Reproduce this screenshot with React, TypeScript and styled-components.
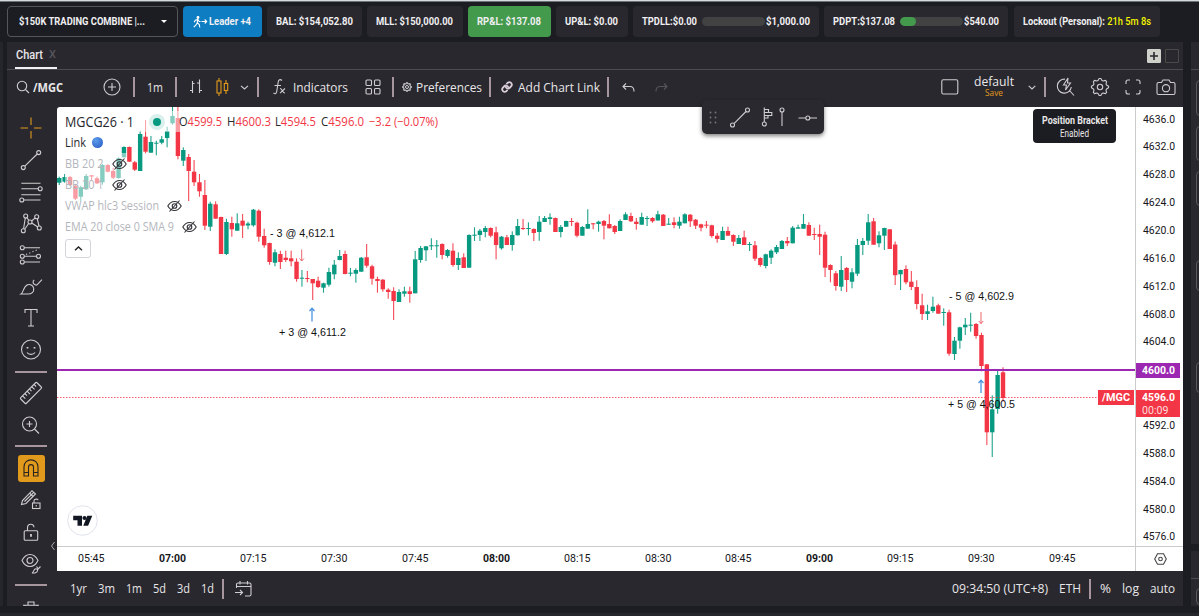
import React, { useLayoutEffect, useRef, useState } from 'react';
import styled, { createGlobalStyle, css } from 'styled-components';

const c = {
  page: '#1c1d22',
  panel: '#29282e',
  line: '#4d4c52',
  icon: '#cfcdd0',
  sep: '#a8969f',
  up: '#089981',
  down: '#f23645',
  purple: '#9c27b0',
  gold: '#e29a1c',
};

const ui = `'Open Sans', 'Noto Sans', sans-serif`;
const roboto = `Roboto, 'Liberation Sans', sans-serif`;

const Global = createGlobalStyle`
  * { box-sizing: border-box; }
  html, body { margin: 0; background: ${c.page}; overflow: hidden; }
`;

/* ---------- text with a set width ---------- */
const FitBox = styled.span<{ $w: number; $ml?: number }>`
  display: inline-block;
  flex: none;
  width: ${p => p.$w}px;
  margin-left: ${p => p.$ml ?? 0}px;
  white-space: pre;
`;
const FitInner = styled.span`
  display: inline-block;
  transform-origin: 0 50%;
`;
function Fit({ w, ml, children }: { w: number; ml?: number; children: React.ReactNode }) {
  const ref = useRef<HTMLSpanElement>(null);
  const [k, setK] = useState(1);
  useLayoutEffect(() => {
    if (ref.current) setK(w / parseFloat(getComputedStyle(ref.current).width));
  }, [w, children]);
  return (
    <FitBox $w={w} $ml={ml}>
      <FitInner ref={ref} style={{ transform: `scaleX(${k})` }}>{children}</FitInner>
    </FitBox>
  );
}

/* ---------- frame ---------- */
const Page = styled.div`
  width: 1199px;
  height: 616px;
  display: flex;
  flex-direction: column;
  background: ${c.page};
  border-top: 1px solid #d5dade;
  box-shadow: inset 0 1px 0 #6d7277;
  overflow: hidden;
  font-family: ${ui};
  color: #e8e6e8;
`;
const Header = styled.header`
  height: 41px;
  flex: none;
  display: flex;
  padding: 5px 0 0 7px;
`;
const Chip = styled.div<{ $w: number; $bg?: string; $gap?: number; $outlined?: boolean; $pad?: number }>`
  width: ${p => p.$w}px;
  height: 31px;
  margin-right: ${p => p.$gap ?? 5}px;
  padding-left: ${p => p.$pad ?? 9}px;
  flex: none;
  display: flex;
  align-items: center;
  border-radius: 4px;
  background: ${p => p.$bg ?? c.panel};
  ${p => p.$outlined && css`border: 1px solid #55555a; background: ${c.page};`}
  font: 700 11px/14px ${roboto};
  color: #f0eff1;
`;
const Caret = styled.i`
  margin-left: 16px;
  border: 3.5px solid transparent;
  border-top-color: #fff;
  border-bottom: 0;
`;
const Meter = styled.div<{ $fill: number }>`
  width: 63px;
  height: 9px;
  margin-left: 5px;
  border-radius: 5px;
  overflow: hidden;
  background: #424243;
  &::before {
    content: '';
    display: block;
    width: ${p => p.$fill}px;
    height: 9px;
    border-radius: 5px;
    background: #439a4d;
  }
`;
const Yellow = styled.span`color: #f5f500; font-weight: 500;`;

const Workspace = styled.main`
  height: 564px;
  flex: none;
  display: flex;
`;
const EdgeStrip = styled.div`
  width: 3px;
  margin: 0 4px 0 0;
  background: #25262b;
`;
const Panel = styled.section`
  width: 1176px;
  background: ${c.panel};
  display: flex;
  flex-direction: column;
  overflow: hidden;
`;
const SidePanels = styled.aside`
  width: 8px;
  margin-left: 8px;
  display: flex;
  flex-direction: column;
  overflow: hidden;
`;
const SidePanel = styled.div<{ $h: number; $mt?: number }>`
  height: ${p => p.$h}px;
  margin-top: ${p => p.$mt ?? 0}px;
  background: ${c.panel};
  flex: none;
`;
const SideRule = styled.div<{ $mt: number }>`
  padding-top: ${p => p.$mt}px;
  border-bottom: 1px solid ${c.line};
`;
const SideField = styled.div<{ $h: number; $mt: number }>`
  width: 20px;
  height: ${p => p.$h}px;
  margin: ${p => p.$mt}px 0 0 5px;
  border: 1px solid #5a5a5e;
  border-radius: 4px;
`;
const Footer = styled.footer`
  height: 10px;
  margin-top: 7px;
  background: #25262b;
`;

const Tabs = styled.div`
  height: 28px;
  flex: none;
  display: flex;
  align-items: stretch;
  padding: 0 4px 0 8px;
  border-bottom: 1px solid ${c.line};
`;
const Tab = styled.div`
  width: 42px;
  display: flex;
  align-items: center;
  border-bottom: 2px solid #f2f2f2;
  font: 500 12px/14px ${roboto};
  padding-left: 1px;
`;
const Close = styled.span`color: #57565b; margin-left: 6px; font-size: 11px;`;
const TabTools = styled.div`
  margin-left: auto;
  display: flex;
  gap: 4px;
  align-items: center;
`;
const TabBtn = styled.span<{ $solid?: boolean }>`
  width: 14px;
  height: 14px;
  border: 1px solid ${p => (p.$solid ? '#cfd2cb' : '#4b4b47')};
  background: ${p => (p.$solid ? '#cfd2cb' : 'transparent')};
  border-radius: 1px;
  display: flex;
  align-items: center;
  justify-content: center;
`;

const Toolbar = styled.div`
  height: 37px;
  flex: none;
  display: flex;
  align-items: center;
  font-size: 13px;
  line-height: 18px;
  padding-bottom: 3px;
  font-weight: 500;
`;
const Sep = styled.i<{ $ml: number }>`
  width: 2px;
  height: 20px;
  flex: none;
  margin-left: ${p => p.$ml}px;
  background: ${c.sep};
`;
const Ico = styled.svg<{ $ml?: number; $c?: string }>`
  flex: none;
  margin-left: ${p => p.$ml ?? 0}px;
  fill: none;
  stroke: ${p => p.$c ?? c.icon};
  stroke-width: 1.1;
  overflow: visible;
`;
const Layout = styled.div`
  width: 40px;
  margin: -2px 0 0 15px;
  display: flex;
  flex-direction: column;
  align-items: center;
  line-height: 13px;
`;
const Save = styled.div`
  color: ${c.gold};
  font-size: 9px;
  line-height: 9px;
  height: 9px;
`;

/* ---------- body ---------- */
const Body = styled.div`
  height: 464px;
  flex: none;
  display: flex;
`;
const DrawBar = styled.nav`
  position: relative;
  width: 50px;
  height: 499px;
  overflow: hidden;
  padding-top: 5.5px;
  display: flex;
  flex-direction: column;
`;
const Tool = styled.div<{ $on?: boolean }>`
  height: 31.7px;
  flex: none;
  margin-left: 10.5px;
  width: 27px;
  display: flex;
  align-items: center;
  justify-content: center;
  ${p => p.$on && css`
    height: 27px;
    margin-top: 2.6px;
    margin-bottom: 2.1px;
    background: ${c.gold};
    border-radius: 3px;
  `}
`;
const Divider = styled.div`
  height: 11.4px;
  flex: none;
  display: flex;
  align-items: center;
  &::before {
    content: '';
    width: 32px;
    height: 2px;
    margin-left: 7.5px;
    background: ${c.sep};
  }
`;
const Collapse = styled.svg`
  position: absolute;
  left: 43px;
  top: 434px;
  fill: none;
  stroke: #aaa;
`;
const ChartBox = styled.div`
  position: relative;
  width: 1126px;
  height: 464px;
  background: #fff;
  border-top-left-radius: 3px;
  display: flex;
  flex-direction: column;
`;
const PlotRow = styled.div`
  height: 440px;
  display: flex;
  border-bottom: 1px solid #cbcbcd;
`;
const Plot = styled.div`
  width: 1079px;
  height: 439px;
  border-right: 1px solid #cbcbcd;
  position: relative;
`;
const PlotSvg = styled.svg`
  position: absolute;
  left: 0;
  top: 0;
`;
const PriceAxis = styled.div`
  width: 47px;
  height: 439px;
  overflow: hidden;
`;
const Price = styled.div<{ $first?: boolean }>`
  height: 27.86px;
  margin-top: ${p => (p.$first ? '-1.4px' : 0)};
  padding-left: 7px;
  display: flex;
  align-items: center;
  font: 400 11px/14px ${roboto};
  color: #16161a;
`;
const TimeRow = styled.div`
  height: 24px;
  display: flex;
`;
const Times = styled.div`
  width: 1079px;
  height: 24px;
  border-right: 1px solid #cbcbcd;
  display: flex;
  padding-left: 0;
  overflow: hidden;
`;
const Time = styled.div<{ $bold?: boolean; $first?: boolean }>`
  width: 80.9px;
  flex: none;
  margin-left: ${p => (p.$first ? '-5.9px' : 0)};
  display: flex;
  align-items: center;
  justify-content: center;
  font: ${p => (p.$bold ? 700 : 400)} 11px/14px ${roboto};
  color: #16161a;
`;
const AxisCog = styled.div`
  flex: 1;
  display: flex;
  align-items: center;
  justify-content: center;
  padding-left: 2px;
`;

const Tag = styled.div<{ $x: number; $y: number; $w: number; $h: number; $bg: string; $pl: number }>`
  position: absolute;
  left: ${p => p.$x}px;
  top: ${p => p.$y}px;
  width: ${p => p.$w}px;
  height: ${p => p.$h}px;
  padding: 2px 0 0 ${p => p.$pl}px;
  background: ${p => p.$bg};
  color: #fff;
  font: 700 11px/12.5px ${roboto};
`;
const Countdown = styled.div`font-weight: 400; color: #ffd9dc;`;

const Legend = styled.div`
  position: absolute;
  left: 8px;
  top: 4px;
  display: flex;
  flex-direction: column;
  align-items: flex-start;
`;
const LegendRow = styled.div<{ $muted?: boolean }>`
  height: 21.1px;
  display: flex;
  align-items: center;
  font-size: 12px;
  line-height: 18px;
  color: ${p => (p.$muted ? '#b4b6bd' : '#26272c')};
  background: rgba(255, 255, 255, 0.5);
`;
const Sym = styled.span`font-size: 14px; display: flex;`;
const Ohlc = styled.span`
  font-size: 12px;
  display: flex;
  b { font-weight: 400; color: ${c.down}; }
`;
const Dot = styled.span`
  width: 16px;
  height: 16px;
  margin-left: 15px;
  border-radius: 50%;
  border: 4.5px solid #d9f0ec;
  background: ${c.up};
`;
const Ball = styled.span`
  width: 11px;
  height: 11px;
  margin-left: 6px;
  border-radius: 50%;
  background: radial-gradient(circle at 35% 30%, #5b9bea, #2557c4);
`;
const Fold = styled.div`
  width: 26px;
  height: 19px;
  margin-top: 1px;
  border: 1px solid #d3d5dc;
  border-radius: 3px;
  background: #fff;
  display: flex;
  align-items: center;
  justify-content: center;
`;
const Logo = styled.svg`
  position: absolute;
  left: 10px;
  top: 398px;
`;
const FloatBar = styled.div`
  position: absolute;
  left: 645px;
  top: -7px;
  width: 122px;
  height: 34px;
  border-radius: 5px;
  background: #2a292f;
  box-shadow: 0 2px 4px rgba(0, 0, 0, 0.5);
`;
const Bracket = styled.div`
  position: absolute;
  left: 976px;
  top: 2px;
  width: 83px;
  height: 34px;
  border-radius: 4px;
  background: ${c.page};
  display: flex;
  flex-direction: column;
  align-items: center;
  padding-top: 5px;
  font: 400 10px/13px ${roboto};
`;
const Strong = styled.div`font-weight: 700;`;
const Note = styled.div<{ $x: number; $y: number }>`
  position: absolute;
  left: ${p => p.$x}px;
  top: ${p => p.$y}px;
  font: 11px/14px 'Liberation Sans', Arial, sans-serif;
  color: #111;
`;

const Main = styled.div`
  display: flex;
  position: relative;
  height: 499px;
`;
const Column = styled.div`
  width: 1126px;
  display: flex;
  flex-direction: column;
`;
const BottomBar = styled.div`
  height: 35px;
  width: 1126px;
  display: flex;
  align-items: center;
  font-size: 12px;
  font-weight: 500;
  line-height: 16px;
`;

/* ---------- market data: [rising, high, body top, body bottom, low] ---------- */
type Bar = [number, number, number, number, number];
const bars: Bar[] = [
  [1,176.7,178,182.7,185],[1,174,177,181.7,182.7],[0,176,177,185,186],[0,185,185.7,198.7,200],
  [1,185.7,187.3,196.7,201],[1,174,176,189.3,190],[0,175.3,175.3,176.5,180.7],[0,176.7,178.3,183.3,184],
  [1,164,165,182.3,184.7],[0,164,165,171.7,172.3],[0,167.7,171,177.7,179],[1,157.3,158.3,178,178.7],
  [1,146.3,147,157.3,157.3],[0,146.5,147,161.7,161.7],[0,161,162.3,169.7,171],[1,130.7,134,171,171],
  [0,120,136.7,151.7,153.3],[1,136,142,152.7,152.7],[1,140.7,142.7,143.7,155.3],[1,136,139.3,142.7,144.3],
  [1,126.7,131,138,147.3],[1,106.7,116,123.3,124.7],[0,107,118,156,159.3],[1,147.3,150,160.7,166],
  [0,154,157,171,201],[0,160,171.7,182.3,186],[0,174,182.3,191.3,196.7],[0,180,195,225.7,230],
  [1,201.7,203.7,226.7,231],[0,201.3,204.3,218.7,218.7],[0,216.7,217,254,254],[1,218.7,222,254,255],
  [0,216.7,223,229.3,236.7],[1,213.3,223.3,230.7,230.7],[0,214,220.7,225.7,238],[1,221.7,223.5,225.5,229.3],
  [1,209,209.7,225.3,226.7],[0,209.3,210.7,236.7,241.7],[0,228.7,236,245.3,247.7],[0,242.7,243,262,264.7],
  [1,249.3,252.3,262.7,266.3],[0,250.7,254,262,269],[0,250.7,257.7,260,262],[0,250.7,258.3,261.3,266.3],
  [0,258.3,261.7,279,281.7],[1,270,277.7,278.7,286.7],[0,271,278,279,282.3],[0,279,279,283.3,300],
  [0,276.7,280.7,287,288],[1,282.7,283.3,287.7,292.7],[1,267.7,272,284.7,286.7],[1,260,264.7,274.3,279.3],
  [1,250,256,260,260.3],[0,250.7,254,274,274.3],[1,268,272.7,273.7,276.3],[1,268.3,270,273.7,282.7],
  [1,257,257.7,271.7,271.7],[0,244,257.3,265.7,267.7],[0,264.7,266.3,278.7,284.7],[0,276.7,279,281,292.7],
  [0,279,279.7,289.3,291.7],[0,288.3,289.7,292,298.7],[0,287.3,291,301,320],[1,289.3,292,302,302],
  [1,286.7,291.3,293.7,296.7],[0,286.7,291.3,294,302.7],[1,251,259.3,293.3,293.3],[1,246,248,260,262.7],
  [1,246,246.3,250.3,261],[1,238.3,245.3,246.3,250],[1,240,245.3,246.3,257.7],[0,243.3,244,255,259.3],
  [1,249,250,256,257.7],[0,243.3,250.7,265,266.7],[1,252.3,258,265,270],[0,253.3,257.3,268,268],
  [1,234.3,235,267.7,267.7],[1,227.3,234.7,235.7,241],[1,229,230.7,235,241],[1,226,228,232,237.3],
  [0,227.3,228,235.7,237.3],[0,226.7,232.3,245,259.3],[1,236,236.7,248.3,249.7],[0,235,237.3,245,245],
  [1,231.3,235,245,250.7],[1,219,226,235.3,235.3],[0,219,228,229,230],[1,222.3,228,229,235.3],
  [0,228.3,229,233,241],[1,216,221.7,232,240.7],[1,216,218,222,222],[1,213.3,217.3,219,224.7],
  [0,217.5,218,232,232],[1,225,227,232,237.3],[1,220.7,221,226.7,226.7],[0,218,221,222,226],
  [0,221.7,222.7,235.7,237.3],[1,226,227,235.7,235.7],[1,209.3,224,228.7,228.7],[0,223,223.3,224.3,229.3],
  [1,220.7,221.7,224,231.7],[0,220,221,225.7,239.3],[0,214.3,224,228.3,228.3],[0,225,226,232,234],
  [1,219.3,221,231,231],[1,212.3,214.3,220,220],[0,212.7,216,221.3,222],[0,218,221.7,224,229.7],
  [1,212.7,217,224.7,224.7],[1,216,218,219,226],[0,217,218,221.3,222.7],[1,210.7,214.3,220.5,220.5],
  [0,214,214.7,226,226],[1,218,223.7,224.7,224.7],[0,217.3,222.3,225,228.3],[1,216.7,221.7,225.7,228.7],
  [1,213.3,214.3,223.3,223.3],[0,214,214.7,221.3,227],[0,219,219.7,225.7,229],[0,223.7,224.3,227.7,231.3],
  [0,221,224.7,225.7,228.3],[0,224.7,225.3,236,237.7],[0,233,235.7,239,242.7],[1,226.7,231,240,240],
  [0,226.7,231,235.7,235.7],[0,234.3,235,241.7,246],[1,235,238,244,244],[0,230.7,237.3,245,245],
  [1,242,244,245,251],[0,241,245.3,258.7,261],[0,257.3,258,265,266.7],[1,253.7,254.3,266,268.3],
  [1,249.3,250.7,257.7,264],[1,245,247,252.3,254],[1,240,241,249,249],[0,237,241,243.3,246],
  [1,226,227.7,243.3,243.3],[1,224.7,227.3,228.7,228.7],[1,214,224,228.7,228.7],[0,222.3,225,235.7,235.7],
  [0,227.7,234,235,240],[0,224.7,234,236.7,255],[0,231.7,234.7,267.7,277],[0,264.3,265,270,282.3],
  [0,271,273.3,286,290.7],[1,256,270,286.7,291],[0,267,268,280,292],[1,268.3,272.3,281.7,288.3],
  [1,239,245,273.7,276],[1,237.9,241,245,255],[1,214,222.3,240.7,245],[0,218,221.3,244.7,244.7],
  [1,231.3,235.3,243.3,247.3],[1,227.7,228,235.7,250],[0,229,229.3,249,249],[0,241.5,244.5,275.2,285],
  [1,269.7,270,274.3,290],[0,265.3,269,282.3,284.3],[0,271,281.7,287,290],[0,280.3,287,304,309.3],
  [0,293.7,305.3,314,320],[1,304.7,311.3,314,320],[1,296.7,306.7,311,312.7],[0,303.7,305.3,313.7,313.7],
  [1,308.3,312,313,325.7],[0,309.7,312.3,353.7,355.7],[1,337,340.7,354,360],[1,326.7,327.3,340.7,348.7],
  [1,318,324.7,327.3,335],[1,312.7,324.7,325.7,331.7],[0,323,324,336,338.7],[0,332.7,335,366,371.3],
  [0,364,364.3,432.3,445],[1,395.3,409.3,432.3,457],[1,370.3,375,409,413.7],[0,367.3,372.3,398,401.7],
];
const TOP = 107;
const PITCH = 5.393;
const FIRST = 2.25;

function Candles() {
  return (
    <g>
      {bars.map(([up, h, t, b, l], i) => {
        const x = FIRST + i * PITCH;
        const fill = up ? c.up : c.down;
        return (
          <g key={i} fill={fill}>
            <rect x={x - 0.55} y={h - TOP} width={1.1} height={l - h} fillOpacity={0.9} />
            <rect x={x - 2.2} y={t - TOP} width={4.4} height={Math.max(1, b - t)} />
          </g>
        );
      })}
    </g>
  );
}

const prices = Array.from({ length: 16 }, (_, i) => (4636 - i * 4).toFixed(1));
const times = ['05:45', '07:00', '07:15', '07:30', '07:45', '08:00', '08:15', '08:30', '08:45', '09:00', '09:15', '09:30', '09:45'];

/* ---------- icons ---------- */
const T = ({ children, color }: { children: React.ReactNode; color?: string }) => (
  <Ico width="30" height="30" viewBox="-15 -15 30 30" $c={color}>{children}</Ico>
);
const EyeOff = () => (
  <Ico $ml={8} width="15" height="12" viewBox="0 0 15 12" $c="#33343a">
    <path d="M.8 6C2.5 3 4.8 1.5 7.5 1.5S12.500 3 14.200 6C12.500 9 10.200 10.500 7.500 10.500S2.500 9 .8 6Z" />
    <circle cx="7.500" cy="6" r="2.300" />
    <path d="M2.500 11.500 12.500.5" />
  </Ico>
);
const gearPath = Array.from({ length: 32 }, (_, i) => {
  const a = ((i - 0.5) / 32) * Math.PI * 2;
  const r = i % 4 < 2 ? 8.6 : 6.8;
  return `${i ? 'L' : 'M'}${(Math.cos(a) * r).toFixed(2)} ${(Math.sin(a) * r).toFixed(2)}`;
}).join('') + 'Z';

const DrawingTools = () => (
  <DrawBar>
    <Tool><T color={c.gold}><path d="M0-10.500v7.500M0 3v7.500M-10.500 0h7.500M3 0h7.500" /></T></Tool>
    <Tool><T><circle cx="-7.700" cy="7.600" r="2" /><circle cx="7.700" cy="-7.400" r="2" /><path d="M-6.200 6.200 6.200-6" /></T></Tool>
    <Tool><T><path d="M-9.700-8.700H9.500M-9.700-3.300H7.200M-9.700 2.700H9.500M-7.200 8H9.500" /><circle cx="9.200" cy="-3.200" r="2" /><circle cx="-9.200" cy="8" r="2" /></T></Tool>
    <Tool><T><path d="M-7.400 5.700-5.700-5M-6.300 6.200-2.400.5M-4.200-5.500-2.200-2.600M.6-2 4.200-5.200M6.200-4.500 8 3M.7 0 6.800 4" /><circle cx="-7.700" cy="7.700" r="2" /><circle cx="-5.300" cy="-7" r="2" /><circle cx="-1" cy="-1" r="2" /><circle cx="5.700" cy="-6.300" r="2" /><circle cx="8.300" cy="5" r="2" /></T></Tool>
    <Tool><T><path d="M-6.700-7.300H9M-6.700 1.300H5.500M-6.700 7H9" /><path d="M-5-.5 8-6" strokeDasharray="1.200 2.300" /><circle cx="-8.700" cy="-7.300" r="2" /><circle cx="-8.700" cy="1.300" r="2" /><circle cx="7.500" cy="1.300" r="2" /><circle cx="-8.700" cy="7" r="2" /></T></Tool>
    <Tool><T><path d="M-10 7C-7.500 5.500-7.700-.5-3.500-2.200-.3-3.300 2.300-1.200 2.700 1.500 3.200 5 .5 7 -3 7ZM11-7.300 6-2.200C4.500-1 2.500-3.200 1.800-3.900M3.200-7C1.500-5.500 2-4 3-3" /></T></Tool>
    <Tool><T><path d="M-6-5V-8.500H6V-5M0-8.500V8M-3 8H3" /></T></Tool>
    <Tool><T><circle r="9.500" cy="-.5" /><path d="M-4 2.500C-2.500 5 2.500 5 4 2.500" /><path d="M-3.500-3v1.600M3.500-3v1.600" strokeWidth="1.800" /></T></Tool>
    <Divider />
    <Tool><T><g transform="rotate(-45)"><rect x="-11.500" y="-4" width="23" height="8" rx="1" /><path d="M-8-4v4M-4.700-4v3M-1.500-4v4M1.700-4v3M5-4v4M8.200-4v3" /></g></T></Tool>
    <Tool><T><circle cx="-1.500" cy="-1" r="7" /><path d="M-4.500-1h6M-1.500-4v6M3.500 4 8 8.500" /></T></Tool>
    <Divider />
    <Tool $on><T color="#2a2420"><path d="M-7 8V-1C-7-10.500 7-10.500 7-1V8H2.500V-1C2.500-4.200-2.500-4.200-2.500-1V8ZM-7 4.500h4.500M2.500 4.500H7" /></T></Tool>
    <Tool><T><path d="M-9.500 4.500-8.500.5 1-9.300 4.500-6-5 3.500ZM-1.500-7 2-3.500M-6.500 1.500 2.500-7.300" /><rect x="1.500" y="3" width="7.500" height="5.500" /><path d="M3 3V.8C3-1.400 7-1.400 7 .3M5.200 5v1.500" /></T></Tool>
    <Tool><T><g transform="translate(0 .7)"><rect x="-6.800" y="-1" width="13.500" height="9.500" rx="1" /><path d="M-3.500-1V-4C-3.500-8.500 3-8.500 3-4.500" /><path d="M0 2.300v2.800" strokeWidth="1.800" /></g></T></Tool>
    <Tool><T><path d="M-9-2.500C-5-10.500 3-10.500 7-2.500 3 5.500-5 5.500-9-2.500Z" /><circle cx="-1" cy="-2.500" r="3" /><path d="M1 10C3 9 2.500 5.800 5 5.800S7 9.500 4 10ZM9.500 3.500 6.800 6.300M5.500 3.500 7.500 6" /></T></Tool>
    <Divider />
    <Tool><T><path d="M-8-.8H8M-3-.8V-4H3V-.8M-6-.8V9H6V-.8" /></T></Tool>
    <Collapse width="5" height="10" viewBox="0 0 5 10"><path d="M4.500 1 1.500 5 4.500 9" /></Collapse>
  </DrawBar>
);

export default function App() {
  return (
    <Page>
      <Global />
      <Header>
        <Chip $w={171} $outlined $pad={11}><Fit w={126}>$150K TRADING COMBINE |...</Fit><Caret /></Chip>
        <Chip $w={79} $bg="#0f7dc2" $pad={10}>
          <Ico width="14" height="12" viewBox="0 0 14 12" $c="#fff">
            <circle cx="5" cy="1.500" r=".9" fill="#fff" />
            <path d="M4.800 3.300 4.200 6.800 6.300 8.500 6.800 11.500M4.200 7 2.800 9.200.8 11.200M1.200 6.200 2.300 4.200 4.800 3.500 6.200 5.500H7.500M8.500 5.500h5M11.700 3.500l2 2-2 2" />
          </Ico>
          <Fit w={42} ml={2}>Leader +4</Fit>
        </Chip>
        <Chip $w={95}><Fit w={77}>BAL: $154,052.80</Fit></Chip>
        <Chip $w={96}><Fit w={77}>MLL: $150,000.00</Fit></Chip>
        <Chip $w={83} $bg="#439a4d"><Fit w={64}>RP&amp;L: $137.08</Fit></Chip>
        <Chip $w={72}><Fit w={53}>UP&amp;L: $0.00</Fit></Chip>
        <Chip $w={186}><Fit w={55}>TPDLL:$0.00</Fit><Meter $fill={0} /><Fit w={44} ml={1}>$1,000.00</Fit></Chip>
        <Chip $w={184} $gap={6}><Fit w={62}>PDPT:$137.08</Fit><Meter $fill={16} /><Fit w={35} ml={1}>$540.00</Fit></Chip>
        <Chip $w={146}><Fit w={128}>Lockout (Personal): <Yellow>21h 5m 8s</Yellow></Fit></Chip>
      </Header>
      <Workspace>
        <EdgeStrip />
        <Panel>
          <Tabs>
            <Tab><Fit w={27}>Chart</Fit><Close>X</Close></Tab>
            <TabTools>
              <TabBtn $solid><Ico width="8" height="8" viewBox="0 0 8 8" $c="#29282e"><path d="M4 0v8M0 4h8" strokeWidth="1.600" /></Ico></TabBtn>
              <TabBtn />
            </TabTools>
          </Tabs>
          <Toolbar>
            <Ico $ml={9} width="14" height="14" viewBox="0 0 14 14"><circle cx="6" cy="6" r="4.700" /><path d="M9.500 9.500 13 13" /></Ico>
            <Fit w={30} ml={3}><strong>/MGC</strong></Fit>
            <Ico $ml={40} width="18" height="18" viewBox="-9 -9 18 18"><circle r="8" /><path d="M-4 0h8M0-4v8" /></Ico>
            <Sep $ml={12} />
            <Fit w={16} ml={12}>1m</Fit>
            <Sep $ml={12} />
            <Ico $ml={12} width="15" height="16" viewBox="0 0 15 16"><path d="M3.500 2v12M3.500 4.500H5.500M1 11.500h2.500M10.500.5v13.500M8 4h2.500M10.500 11.500H13" /></Ico>
            <Ico $ml={12} width="14" height="18" viewBox="0 0 14 18" $c={c.gold}><path d="M3 0v3M3 15v3M10 2v3.500M10 12.500v3.500" /><rect x="1" y="3" width="4" height="12" /><rect x="8.300" y="5.500" width="3.400" height="7" /></Ico>
            <Ico $ml={10} width="9" height="5" viewBox="0 0 9 5"><path d="M1 .8 4.500 4 8 .8" /></Ico>
            <Sep $ml={8} />
            <Ico $ml={14} width="13" height="16" viewBox="0 0 13 16"><path d="M9 1.500C7-.2 5.500 1 5.200 3L3.800 12C3.500 14.800 2 15.300.5 14M1.500 6.500H8M7 9.500C9 9 9.500 14.500 12 14M12 9.500 7 14.200" /></Ico>
            <Fit w={55} ml={7}>Indicators</Fit>
            <Ico $ml={17} width="16" height="16" viewBox="0 0 16 16"><rect x="1" y="1" width="5.500" height="5.500" rx="1" /><rect x="9.500" y="1" width="5.500" height="5.500" rx="1" /><rect x="1" y="9.500" width="5.500" height="5.500" rx="1" /><rect x="9.500" y="9.500" width="5.500" height="5.500" rx="1" /></Ico>
            <Sep $ml={11} />
            <Ico $ml={8} width="10" height="10" viewBox="-10 -10 20 20"><path d={gearPath} strokeWidth="2.200" /><circle r="3" strokeWidth="2" /></Ico>
            <Fit w={66} ml={4}>Preferences</Fit>
            <Sep $ml={7} />
            <Ico $ml={10} width="12" height="12" viewBox="0 0 24 24" $c="#d9cdd9"><path strokeWidth="3.600" strokeLinecap="round" d="M10 13a5 5 0 0 0 7.500.5l3-3a5 5 0 0 0-7-7l-1.700 1.700M14 11a5 5 0 0 0-7.500-.5l-3 3a5 5 0 0 0 7 7l1.700-1.700" /></Ico>
            <Fit w={82} ml={5}>Add Chart Link</Fit>
            <Sep $ml={7} />
            <Ico $ml={13} width="13" height="9" viewBox="0 0 13 9"><path d="M4 .5 1 3.500 4 6.500M1 3.500H8C11 3.500 12 5.500 12 8.500" /></Ico>
            <Ico $ml={20} width="13" height="9" viewBox="0 0 13 9" $c="#57565b"><path d="M9 .5 12 3.500 9 6.500M12 3.500H5C2 3.500 1 5.500 1 8.500" /></Ico>
            <Ico $ml={273} width="18" height="16" viewBox="0 0 18 16"><rect x=".8" y=".8" width="16" height="14.200" rx="1.500" /></Ico>
            <Layout><Fit w={40}>default</Fit><Save><Fit w={18}>Save</Fit></Save></Layout>
            <Ico $ml={14} width="8" height="5" viewBox="0 0 8 5"><path d="M.7.8 4 4 7.300.8" /></Ico>
            <Sep $ml={8} />
            <Ico $ml={11} width="18" height="18" viewBox="0 0 18 18"><path d="M8 1.200A7 7 0 1 0 14.300 9M12.500 12.500 17 17.500M11 0 6.500 7H9.500L8.500 12 13.500 5H10.500Z" /></Ico>
            <Ico $ml={16} width="18" height="18" viewBox="-9 -9 18 18"><path d={gearPath} strokeLinejoin="round" /><circle r="2.700" /></Ico>
            <Ico $ml={16} width="16" height="16" viewBox="0 0 16 16"><path d="M1 5V3Q1 1 3 1H5M11 1h2Q15 1 15 3V5M15 11v2Q15 15 13 15H11M5 15H3Q1 15 1 13V11" /></Ico>
            <Ico $ml={15} width="20" height="17" viewBox="0 0 20 17"><path d="M2.500 3.500H5.500L7 1H13L14.500 3.500H17.500Q19 3.500 19 5V14Q19 15.500 17.500 15.500H2.500Q1 15.500 1 14V5Q1 3.500 2.500 3.500Z" /><circle cx="10" cy="9.200" r="3.600" /></Ico>
          </Toolbar>
          <Main>
            <DrawingTools />
            <Column>
              <Body>
                <ChartBox>
                  <PlotRow>
                    <Plot>
                      <PlotSvg width="1078" height="439">
                        <Candles />
                        <g fill="none" strokeWidth="1">
                          <path d="M0 263H1078" stroke={c.purple} strokeWidth="2" />
                          <path d="M0 290.500H1041" stroke={c.down} strokeDasharray="1.500 1.500" opacity=".8" />
                          <path d="M244.700 142.500v11.500M242.500 151.500l2.200 2.500 2.200-2.500" stroke="#e9686f" />
                          <path d="M255 214.500v-13M252.500 204l2.500-2.700 2.500 2.700" stroke="#4d94e0" strokeWidth="1.300" />
                          <path d="M924 205v12M921.800 214l2.200 2.500 2.200-2.500" stroke="#e9686f" />
                          <path d="M924 286v-12M921.500 276l2.500-2.700 2.500 2.700" stroke="#4d94e0" strokeWidth="1.300" />
                        </g>
                      </PlotSvg>
                      <Note $x={213} $y={119}><Fit w={65}>- 3 @ 4,612.1</Fit></Note>
                      <Note $x={222} $y={218}><Fit w={67}>+ 3 @ 4,611.2</Fit></Note>
                      <Note $x={892} $y={182}><Fit w={65}>- 5 @ 4,602.9</Fit></Note>
                      <Note $x={891} $y={290}><Fit w={67}>+ 5 @ 4,600.5</Fit></Note>
                      <Legend>
                        <LegendRow>
                          <Sym><Fit w={69}>MGCG26 · 1</Fit></Sym>
                          <Dot />
                          <Ohlc>
                            <Fit w={43} ml={14}>O<b>4599.5</b></Fit>
                            <Fit w={44} ml={5}>H<b>4600.3</b></Fit>
                            <Fit w={41} ml={4}>L<b>4594.5</b></Fit>
                            <Fit w={43} ml={5}>C<b>4596.0</b></Fit>
                            <Fit w={69} ml={5}><b>−3.2 (−0.07%)</b></Fit>
                          </Ohlc>
                        </LegendRow>
                        <LegendRow><Fit w={21}>Link</Fit><Ball /></LegendRow>
                        <LegendRow $muted><Fit w={38.5}>BB 20 2</Fit><EyeOff /></LegendRow>
                        <LegendRow $muted><Fit w={38.5}>BB 20 1</Fit><EyeOff /></LegendRow>
                        <LegendRow $muted><Fit w={94}>VWAP hlc3 Session</Fit><EyeOff /></LegendRow>
                        <LegendRow $muted><Fit w={109}>EMA 20 close 0 SMA 9</Fit><EyeOff /></LegendRow>
                        <Fold><Ico width="9" height="5" viewBox="0 0 9 5" $c="#222"><path d="M1 4.200 4.500 1 8 4.200" strokeWidth="1.400" /></Ico></Fold>
                      </Legend>
                      <Logo width="31" height="31" viewBox="-15.500 -15.500 31 31">
                        <circle r="14.800" fill="#fff" stroke="#e0e3eb" />
                        <path d="M-9.300-4.700H-.5V5.300H-5V-.3H-9.300ZM4.800-4.700H9.800L5.600 5.300H.8Z" fill="#131722" />
                        <circle cx="2" cy="-2.500" r="2.100" fill="#131722" />
                      </Logo>
                    </Plot>
                    <PriceAxis>
                      {prices.map((p, i) => <Price key={p} $first={i === 0}><Fit w={32}>{p}</Fit></Price>)}
                    </PriceAxis>
                  </PlotRow>
                  <TimeRow>
                    <Times>
                      {times.map((t, i) => {
                        const bold = t.endsWith(':00');
                        return <Time key={t} $first={i === 0} $bold={bold}><Fit w={bold ? 27 : 26.5}>{t}</Fit></Time>;
                      })}
                    </Times>
                    <AxisCog>
                      <Ico width="13" height="12" viewBox="0 0 13 12" $c="#444"><path d="M3.500.8h6L12.300 6 9.500 11.200h-6L.7 6Z" /><circle cx="6.500" cy="6" r="1.800" /></Ico>
                    </AxisCog>
                  </TimeRow>
                  <Tag $x={1079} $y={256} $w={44} $h={15} $bg={c.purple} $pl={6}><Fit w={33}>4600.0</Fit></Tag>
                  <Tag $x={1041} $y={283} $w={36} $h={15} $bg={c.down} $pl={4}><Fit w={28}>/MGC</Fit></Tag>
                  <Tag $x={1079} $y={283} $w={44} $h={27} $bg={c.down} $pl={6}>
                    <Fit w={33}>4596.0</Fit>
                    <Countdown><Fit w={26.5}>00:09</Fit></Countdown>
                  </Tag>
                  <FloatBar>
                    <Ico width="122" height="34" viewBox="0 0 122 34">
                      <g fill="#77767b" stroke="none">
                        {[12.5, 17.500, 22.500].map(y => <React.Fragment key={y}><circle cx="8.500" cy={y} r=".9" /><circle cx="13.500" cy={y} r=".9" /></React.Fragment>)}
                      </g>
                      <circle cx="30.500" cy="25" r="2" /><circle cx="45.500" cy="10" r="2" /><path d="M32 23.600 44 11.500" />
                      <path d="M62.300 7.500V22M62.300 9.500H66.500V12.500H69.800V15.500H66V18H62.300M62.300 12.500H66.500M62.300 15.500H66" />
                      <circle cx="62.300" cy="24" r="2" />
                      <circle cx="80" cy="10" r="2" /><path d="M80 12V26" />
                      <path d="M96.500 18h7.300M107.800 18H115" /><circle cx="105.800" cy="18" r="2" />
                    </Ico>
                  </FloatBar>
                  <Bracket>
                    <Strong><Fit w={66}>Position Bracket</Fit></Strong>
                    <Fit w={29}>Enabled</Fit>
                  </Bracket>
                </ChartBox>
              </Body>
              <BottomBar>
                <Fit w={17} ml={13}>1yr</Fit>
                <Fit w={17} ml={11}>3m</Fit>
                <Fit w={16} ml={11}>1m</Fit>
                <Fit w={13} ml={11}>5d</Fit>
                <Fit w={13} ml={11}>3d</Fit>
                <Fit w={13} ml={11}>1d</Fit>
                <Sep $ml={8} />
                <Ico $ml={11} width="18" height="18" viewBox="0 0 18 18"><path d="M1.500 8V4.500Q1.500 3 3 3H14.500Q16 3 16 4.500V14.500Q16 16 14.500 16H10M1.500 6.500H16M5 1V4.500M12.500 1V4.500M0 12.500H7.500M5 10l2.500 2.500L5 15" /></Ico>
                <Fit w={96} ml={699}>09:34:50 (UTC+8)</Fit>
                <Fit w={22} ml={11}>ETH</Fit>
                <Sep $ml={8} />
                <Fit w={11} ml={9}>%</Fit>
                <Fit w={17} ml={11}>log</Fit>
                <Fit w={25} ml={11}>auto</Fit>
              </BottomBar>
            </Column>
          </Main>
        </Panel>
        <SidePanels>
          <SidePanel $h={502}>
            <SideRule $mt={27} />
            <SideField $mt={10} $h={36} />
            <SideField $mt={10} $h={35} />
            <SideField $mt={10} $h={35} />
            <SideField $mt={54} $h={31} />
            <SideField $mt={71} $h={31} />
          </SidePanel>
          <SidePanel $h={55} $mt={7}>
            <SideRule $mt={27} />
            <SideField $mt={9} $h={17} />
          </SidePanel>
        </SidePanels>
      </Workspace>
      <Footer />
    </Page>
  );
}
